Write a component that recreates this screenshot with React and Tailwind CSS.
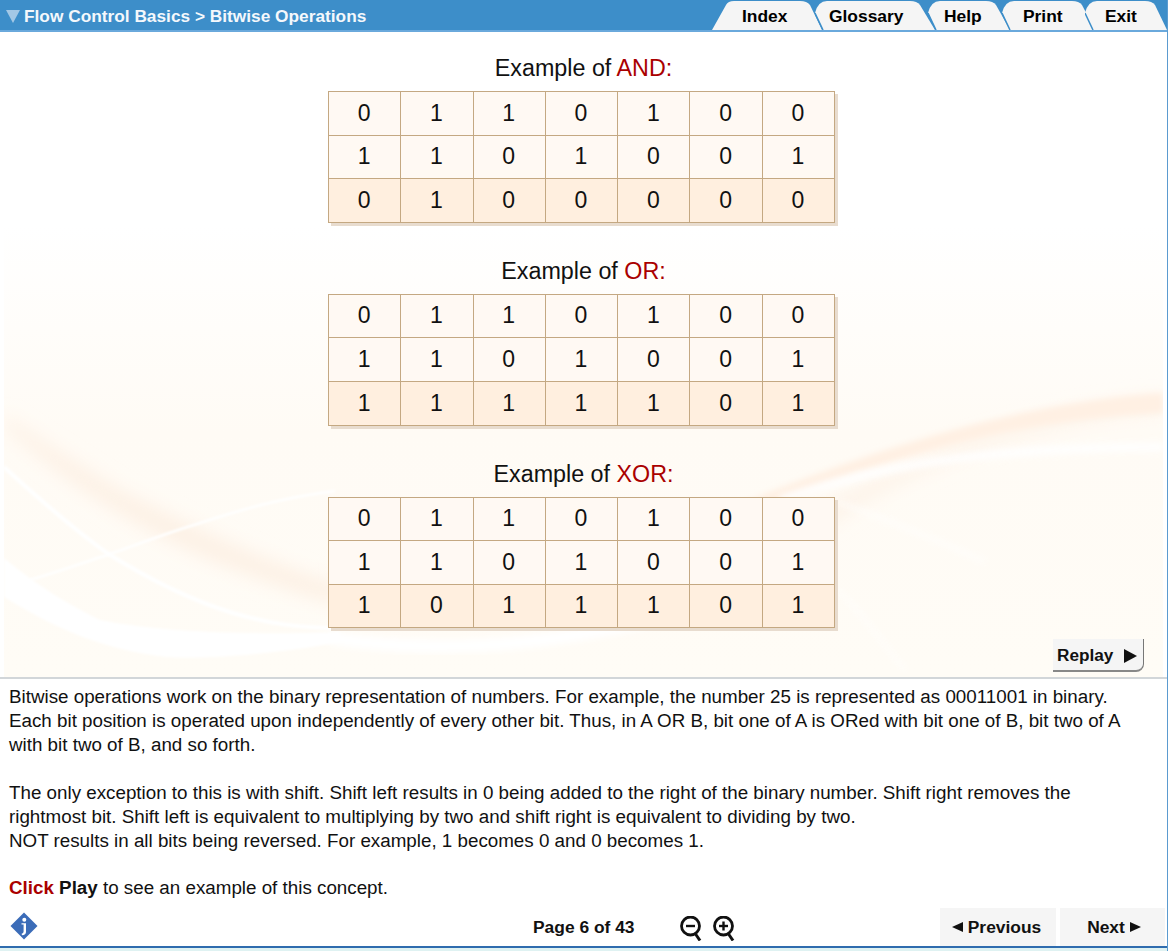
const tables = [
    {
        title: "AND:",
        rows: ["0110100", "1101001", "0100000"],
    },
    {
        title: "OR:",
        rows: ["0110100", "1101001", "1111101"],
    },
    {
        title: "XOR:",
        rows: ["0110100", "1101001", "1011101"],
    },
];

const tabs = [
    { label: "Index", box: "w-[110px]", view: "0 0 110 30", path: "M0 30 L14 5 Q16 1 22 1 L88 1 Q95 1 98 5 L110 30 Z", text: "pl-[30px]" },
    { label: "Glossary", box: "w-[120px] -ml-[7px]", view: "0 0 120 30", path: "M8 30 L0 13 Q3 1 12 1 L95 1 Q102 1 105 5 L120 30 Z", text: "pl-[14px]" },
    { label: "Help", box: "w-[82px] -ml-[7px]", view: "0 0 82 30", path: "M8 30 L0 13 Q3 1 12 1 L58 1 Q65 1 68 5 L82 30 Z", text: "pl-[16px]" },
    { label: "Print", box: "w-[93px] -ml-[8px]", view: "0 0 93 30", path: "M8 30 L0 13 Q3 1 12 1 L70 1 Q77 1 80 5 L93 30 Z", text: "pl-[21px]" },
    { label: "Exit", box: "w-[82px] -ml-[10px]", view: "0 0 82 30", path: "M8 30 L0 13 Q3 1 12 1 L60 1 Q67 1 70 5 L82 30 Z", text: "pl-[20px]" },
];

function Tab({ tab, first }) {
    return (
        <div className={`relative h-[30px] ${tab.box}`}>
            <svg className="absolute inset-0 h-full w-full" viewBox={tab.view} aria-hidden="true">
                <path d={tab.path} fill="#f5f5f5" />
                {!first && <path d="M8 30 L0 13" fill="none" stroke="#3d8ec9" strokeWidth="1.5" />}
            </svg>
            <span className={`relative block pt-[6px] text-[17.4px] leading-[20px] font-bold text-black ${tab.text}`}>
                {tab.label}
            </span>
        </div>
    );
}

// soft wave artwork behind the tables
function BackgroundArt() {
    return (
        <svg className="absolute left-[4px] top-0 h-[645px] w-[1159px]" viewBox="4 32 1159 645" preserveAspectRatio="none" aria-hidden="true">
            <defs>
                <linearGradient id="fade" x1="0" y1="0" x2="0" y2="1">
                    <stop offset="0" stopColor="#ffffff" />
                    <stop offset="0.3" stopColor="#ffffff" />
                    <stop offset="0.62" stopColor="#fffbf5" />
                    <stop offset="1" stopColor="#fffcf6" />
                </linearGradient>
                <filter id="soft" x="-10%" y="-30%" width="120%" height="160%">
                    <feGaussianBlur stdDeviation="9" />
                </filter>
                <filter id="thin" x="-10%" y="-30%" width="120%" height="160%">
                    <feGaussianBlur stdDeviation="1.2" />
                </filter>
                <filter id="mid" x="-10%" y="-30%" width="120%" height="160%">
                    <feGaussianBlur stdDeviation="3" />
                </filter>
            </defs>
            <rect x="4" y="32" width="1159" height="645" fill="url(#fade)" />
            <path d="M4 425 C60 480 130 525 210 560 C260 580 300 595 340 605 L340 585 C260 560 180 520 120 490 C80 465 40 440 4 415Z" fill="#fdf1e5" filter="url(#soft)" />
            <path d="M340 560 C500 600 650 590 760 545 C840 490 1000 410 1163 398 L1163 412 C1020 420 880 480 780 560 C640 620 450 610 340 580Z" fill="#fdf3e8" filter="url(#soft)" />
            <path d="M700 520 C790 485 960 408 1163 393 L1163 413 C1040 418 900 450 760 512 C730 525 710 528 700 520Z" fill="#fff0e3" filter="url(#mid)" />
            <path d="M4 467 C40 500 75 530 107 553 C150 580 190 600 233 613 C270 624 300 628 340 628" fill="none" stroke="#ffffff" strokeWidth="4" filter="url(#thin)" />
            <path d="M30 580 C70 568 85 562 107 555 C150 540 170 532 200 523 C240 510 280 498 335 491" fill="none" stroke="#ffffff" strokeWidth="2.4" filter="url(#thin)" />
            <path d="M780 500 C880 465 980 448 1163 447" fill="none" stroke="#ffffff" strokeWidth="9" opacity="0.85" filter="url(#mid)" />
            <path d="M838 502 C900 525 960 550 985 562" fill="none" stroke="#ffffff" strokeWidth="4" opacity="0.6" filter="url(#mid)" />
            <path d="M838 590 C860 610 880 640 905 670" fill="none" stroke="#ffffff" strokeWidth="4" opacity="0.5" filter="url(#mid)" />
            <path d="M4 558 C40 588 70 605 100 620 C150 630 230 636 340 632 L340 642 C300 650 220 660 167 657 C100 650 50 625 4 597Z" fill="#ffffff" filter="url(#thin)" />
            <path d="M330 638 C420 652 530 650 660 618" fill="none" stroke="#ffffff" strokeWidth="13" filter="url(#mid)" />
        </svg>
    );
}

function BitTable({ example }) {
    return (
        <div className="flex flex-col items-center">
            <h2 className="ml-[4px] h-[28px] text-[23.3px] leading-[28px] font-normal text-[#111]">
                Example of <span className="text-[#aa0000]">{example.title}</span>
            </h2>
            <div className="mt-[9px] w-[507px] border-t border-l border-[#c4a882] shadow-[3px_3px_0_#e8dccf]">
                {example.rows.map((row, r) => (
                    <div key={r} className={`grid grid-cols-7 ${r === 2 ? "bg-[#ffefdf]" : "bg-[#fff9f3]"}`}>
                        {row.split("").map((bit, c) => (
                            <div
                                key={c}
                                className="flex h-[43.6px] items-center justify-center border-r border-b border-[#c4a882] pb-[1px] pr-[1px] text-[23px] text-[#111]"
                            >
                                {bit}
                            </div>
                        ))}
                    </div>
                ))}
            </div>
        </div>
    );
}

function InfoIcon() {
    return (
        <svg width="28" height="28" viewBox="0 0 28 28" aria-hidden="true">
            <path d="M14 0.5 L27.5 14 L14 27.5 L0.5 14 Z" fill="#3b6cb8" />
            <circle cx="14.3" cy="7.8" r="2" fill="#fff" />
            <path d="M11.5 11.2 H16 V20 Q16 23 12 23.2 L11.6 21.8 Q13.6 21.4 13.6 19.4 V12.6 H11.5 Z" fill="#fff" />
        </svg>
    );
}

function ZoomIcon({ plus }) {
    return (
        <svg width="22" height="25" viewBox="0 0 22 25" aria-hidden="true">
            <circle cx="10.5" cy="10" r="9" fill="none" stroke="#111" strokeWidth="2.8" />
            <path d="M6 10 H15" stroke="#111" strokeWidth="2.4" />
            {plus && <path d="M10.5 5.5 V14.5" stroke="#111" strokeWidth="2.4" />}
            <path d="M15.5 18 L20 24.5" stroke="#111" strokeWidth="3" />
        </svg>
    );
}

export default function App() {
    return (
        <div className="flex h-[951px] w-[1168px] flex-col overflow-hidden border-r border-r-[#5b9bd0] bg-white font-['Liberation_Sans',Arial,sans-serif] text-black">
            <header className="flex h-[32px] shrink-0 items-start justify-between border-b-2 border-b-[#6aa9dc] bg-[#3d8ec9]">
                <div className="flex items-center pl-[6px] pt-[6px] text-[17.3px] leading-[20px] font-bold text-[#f4f8fc]">
                    <span className="mr-[4px] h-0 w-0 border-x-[7px] border-t-[13px] border-x-transparent border-t-[#a3c8e6]" />
                    Flow Control Basics &gt; Bitwise Operations
                </div>
                <nav className="flex">
                    {tabs.map((tab, i) => (
                        <Tab key={tab.label} tab={tab} first={i === 0} />
                    ))}
                </nav>
            </header>

            <main className="relative h-[647px] shrink-0 border-b-2 border-b-[#d2d6d9]">
                <BackgroundArt />
                <div className="relative flex flex-col gap-[34px] pt-[22px] pr-[4px]">
                    {tables.map(example => (
                        <BitTable key={example.title} example={example} />
                    ))}
                </div>
                <button className="absolute right-[23px] top-[607px] flex h-[33px] w-[91px] items-center justify-between rounded-br-[8px] border-r border-b-2 border-r-[#777] border-b-[#888] bg-[#f5f5f5] pl-[4px] pr-[6px] pt-[2px] text-[17.2px] font-bold text-[#111]">
                    Replay
                    <span className="h-0 w-0 border-y-[7px] border-l-[13px] border-y-transparent border-l-[#111]" />
                </button>
            </main>

            <section className="h-[223px] shrink-0 px-[9px] pt-[6px] text-[18.8px] leading-[24px] text-[#111]">
                <p className="whitespace-nowrap">
                    Bitwise operations work on the binary representation of numbers. For example, the number 25 is represented as 00011001 in binary.
                    <br />
                    Each bit position is operated upon independently of every other bit. Thus, in A OR B, bit one of A is ORed with bit one of B, bit two of A
                    <br />
                    with bit two of B, and so forth.
                </p>
                <p className="mt-[24px] whitespace-nowrap">
                    The only exception to this is with shift. Shift left results in 0 being added to the right of the binary number. Shift right removes the
                    <br />
                    rightmost bit. Shift left is equivalent to multiplying by two and shift right is equivalent to dividing by two.
                    <br />
                    NOT results in all bits being reversed. For example, 1 becomes 0 and 0 becomes 1.
                </p>
                <p className="mt-[23px]">
                    <b className="text-[#aa0000]">Click</b> <b>Play</b> to see an example of this concept.
                </p>
            </section>

            <footer className="flex h-[46px] shrink-0 items-start border-b-2 border-b-[#2f6cae]">
                <div className="ml-[10px] pt-[10px]">
                    <InfoIcon />
                </div>
                <div className="ml-[495px] pt-[15px] text-[17.4px] leading-[20px] font-bold text-[#111]">Page 6 of 43</div>
                <div className="ml-[45px] flex gap-[11px] pt-[14px]">
                    <ZoomIcon />
                    <ZoomIcon plus />
                </div>
                <button className="ml-[205px] mt-[6px] flex h-[38px] w-[116px] items-center justify-center gap-[5px] bg-[#f5f5f5] pr-[2px] text-[17.4px] font-bold text-[#111]">
                    <span className="h-0 w-0 border-y-[5.5px] border-r-[11px] border-y-transparent border-r-[#111]" />
                    Previous
                </button>
                <button className="ml-[4px] mt-[6px] flex h-[38px] w-[105px] items-center justify-center gap-[5px] bg-[#f5f5f5] pl-[4px] text-[17.4px] font-bold text-[#111]">
                    Next
                    <span className="h-0 w-0 border-y-[5.5px] border-l-[11px] border-y-transparent border-l-[#111]" />
                </button>
            </footer>
            <div className="h-[3px] shrink-0 bg-[#dff2f2]" />
        </div>
    );
}
